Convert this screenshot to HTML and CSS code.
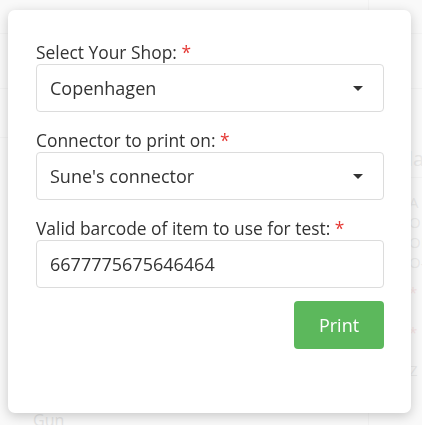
FILE: index.html
```html
<!DOCTYPE html>
<html>
<head>
<meta charset="utf-8">
<link rel="stylesheet" href="styles.css">
</head>
<body>
<div class="page">
  <div class="bg-main">
    <div class="bg-row r1"></div>
    <div class="bg-row r2"></div>
    <div class="bg-row r3"></div>
    <div class="bg-spacer"></div>
    <div class="bg-gun">Gun</div>
  </div>
  <div class="bg-side">
    <div class="bg-row r1"></div>
    <div class="bg-row r2"></div>
    <div class="bg-head">la</div>
    <div class="bg-list">
      <div class="bg-line">A</div>
      <div class="bg-line">O1</div>
      <div class="bg-line">ON</div>
      <div class="bg-line">O{</div>
      <div class="bg-line red">*</div>
      <div class="bg-line red">*</div>
      <div class="bg-line z">Z</div>
    </div>
  </div>
</div>
<div class="backdrop"></div>
<div class="modal">
  <form class="form">
    <div class="field">
      <label class="label">Select Your Shop: <span class="req">*</span></label>
      <div class="select"><span>Copenhagen</span><span class="caret"></span></div>
    </div>
    <div class="field">
      <label class="label">Connector to print on: <span class="req">*</span></label>
      <div class="select"><span>Sune's connector</span><span class="caret"></span></div>
    </div>
    <div class="field">
      <label class="label">Valid barcode of item to use for test: <span class="req">*</span></label>
      <div class="input">6677775675646464</div>
    </div>
    <div class="actions">
      <button type="button" class="btn">Print</button>
    </div>
  </form>
</div>
</body>
</html>
```
FILE: styles.css
```css
html, body {
  margin: 0;
  padding: 0;
  height: 100%;
}
body {
  background: #f9f9f9;
  font-family: "Open Sans", "Noto Sans", sans-serif;
  color: #333;
  overflow: hidden;
}
.page {
  display: grid;
  grid-template-columns: 368px 1fr;
  height: 425px;
}
.bg-main {
  display: flex;
  flex-direction: column;
}
.bg-row {
  border-bottom: 1px solid #ececec;
}
.r1 { height: 33px; }
.r2 { height: 54px; }
.r3 { height: 48px; }
.bg-spacer {
  flex: 1;
}
.bg-gun {
  padding-left: 33px;
  font-size: 16px;
  color: #d0d0d0;
  line-height: 14px;
  height: 12px;
}
.bg-side {
  border-left: 1px solid #ececec;
  display: flex;
  flex-direction: column;
}
.bg-head {
  font-size: 20px;
  color: #dadada;
  padding: 58px 0 6px 39px;
  line-height: 24px;
  border-bottom: 1px solid #ececec;
}
.bg-list {
  padding: 14px 0 0 40px;
  display: flex;
  flex-direction: column;
}
.bg-line {
  font-size: 15px;
  color: #dcdcdc;
  line-height: 20px;
}
.bg-line.red {
  color: #f3d3d3;
  line-height: 40px;
}
.bg-line.z {
  margin-top: 8px;
}
.backdrop {
  position: fixed;
  inset: 0;
  background: rgba(250, 250, 250, 0.5);
}
.modal {
  position: absolute;
  left: 8px;
  top: 10px;
  width: 403px;
  height: 403px;
  box-sizing: border-box;
  background: #fff;
  border-radius: 7px;
  box-shadow: 0 3px 12px rgba(0, 0, 0, 0.2);
  padding: 30px 27px 0 28px;
}
.form {
  display: flex;
  flex-direction: column;
  gap: 16px;
}
.field {
  display: flex;
  flex-direction: column;
}
.label {
  font-size: 17.4px;
  line-height: 24px;
  color: #333;
}
.req {
  color: #e53935;
}
.select, .input {
  height: 48px;
  box-sizing: border-box;
  border: 1px solid #dcdcdc;
  border-radius: 4px;
  display: flex;
  align-items: center;
  padding: 0 20px 0 13px;
  font-size: 18px;
  color: #333;
}
.select {
  justify-content: space-between;
}
.caret {
  width: 0;
  height: 0;
  border-left: 5px solid transparent;
  border-right: 5px solid transparent;
  border-top: 5px solid #333;
}
.actions {
  display: flex;
  justify-content: flex-end;
  margin-top: -3px;
}
.btn {
  width: 90px;
  height: 48px;
  border: none;
  border-radius: 4px;
  background: #5cb85c;
  color: #fff;
  font-family: inherit;
  font-size: 18px;
}
```
